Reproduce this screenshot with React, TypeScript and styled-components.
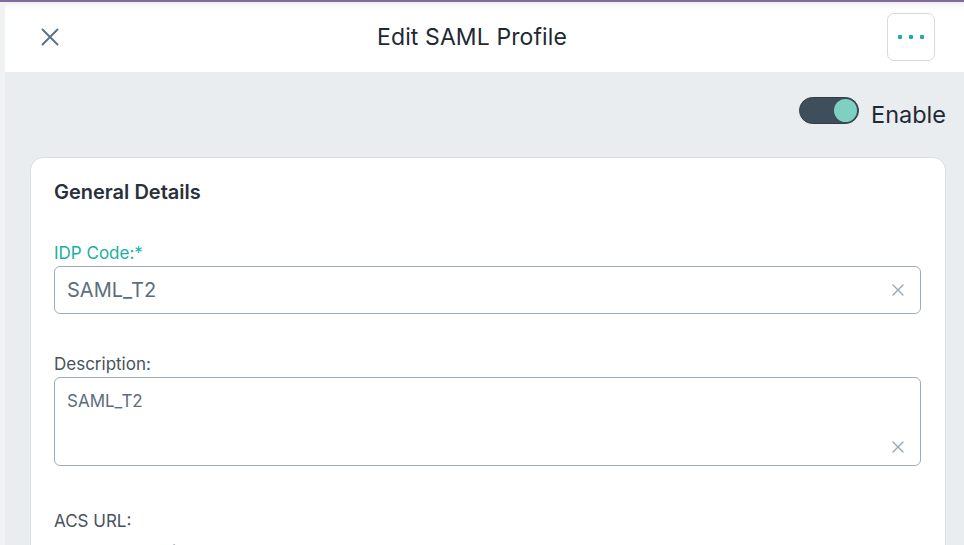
import React from "react"
import styled, { createGlobalStyle } from "styled-components"

const GlobalStyle = createGlobalStyle`
    html, body {
        margin: 0;
        padding: 0;
        height: 100%;
        overflow: hidden;
        background: #f1f2f4;
        font-family: Inter, "Noto Sans", sans-serif;
    }
    * {
        box-sizing: border-box;
    }
`

const Page = styled.div`
    display: flex;
    height: 545px;
    border-top: 2px solid #7f6c9b;
    padding-left: 5px;
`

const Panel = styled.div`
    flex: 1;
    display: flex;
    flex-direction: column;
    background: #eaedf0;
    overflow: hidden;
`

const Header = styled.header`
    height: 70px;
    flex-shrink: 0;
    display: flex;
    align-items: center;
    padding: 0 29px 0 27px;
    background: #ffffff;
    box-shadow: inset 0 7px 6px -5px rgba(60, 60, 80, 0.12);
`

const IconButton = styled.button`
    width: 36px;
    height: 36px;
    padding: 0;
    border: 0;
    background: transparent;
    display: flex;
    align-items: center;
    justify-content: center;
    color: #5a7386;
    cursor: pointer;
`

const Title = styled.h1`
    flex: 1;
    margin: 0 11px 0 0;
    text-align: center;
    font-size: 23px;
    font-weight: 400;
    color: #1f2933;
    letter-spacing: 0.1px;
`

const MoreButton = styled.button`
    width: 48px;
    height: 48px;
    padding: 0;
    border: 1px solid #d3dae1;
    border-radius: 7px;
    background: #ffffff;
    display: flex;
    align-items: center;
    justify-content: center;
    gap: 7px;
    cursor: pointer;
`

const Dot = styled.span`
    width: 4px;
    height: 4px;
    border-radius: 1px;
    background: #17b3a0;
`

const Body = styled.div`
    padding: 25px 18px 0 25px;
`

const EnableRow = styled.div`
    display: flex;
    justify-content: flex-end;
    align-items: center;
    gap: 12px;
    height: 27px;
`

const Track = styled.div<{ $on: boolean }>`
    width: 60px;
    height: 27px;
    border-radius: 14px;
    background: ${({ $on }) => ($on ? "#3e4e5b" : "#c5ccd3")};
    border: 1px solid #2f3d49;
    display: flex;
    align-items: center;
    justify-content: ${({ $on }) => ($on ? "flex-end" : "flex-start")};
    padding: 0 1px;
`

const Knob = styled.span`
    width: 23px;
    height: 23px;
    border-radius: 50%;
    background: #7fd0c1;
`

const EnableLabel = styled.span`
    margin-top: 7px;
    font-size: 23.5px;
    color: #1f2a37;
`

const Card = styled.section`
    margin-top: 33px;
    background: #ffffff;
    border: 1px solid #d9dee4;
    border-radius: 13px;
    padding: 22px 24px 0 23px;
    height: 420px;
`

const CardTitle = styled.h2`
    margin: 0 0 39px;
    font-size: 20px;
    line-height: 24px;
    font-weight: 600;
    color: #27303b;
`

const Field = styled.div<{ $gap?: number }>`
    display: flex;
    flex-direction: column;
    gap: 3px;
    margin-bottom: ${({ $gap }) => $gap ?? 40}px;
`

const Label = styled.label<{ $accent?: boolean }>`
    font-size: 17px;
    line-height: 20px;
    color: ${({ $accent }) => ($accent ? "#19b09c" : "#47525e")};
`

const InputBox = styled.div<{ $multi?: boolean }>`
    position: relative;
    height: ${({ $multi }) => ($multi ? 89 : 48)}px;
    border: 1px solid #9eacb9;
    border-radius: 6px;
    display: flex;
    align-items: ${({ $multi }) => ($multi ? "flex-start" : "center")};
    padding: ${({ $multi }) => ($multi ? "13px 12px" : "0 12px")};
    color: #5d6d7d;
`

const Value = styled.span<{ $small?: boolean }>`
    font-size: ${({ $small }) => ($small ? 17 : 20)}px;
    line-height: 20px;
    flex: 1;
`

const Clear = styled.span<{ $multi?: boolean }>`
    position: absolute;
    right: 16px;
    ${({ $multi }) => ($multi ? "bottom: 12px;" : "top: 17px;")}
    width: 12px;
    height: 12px;
    display: flex;
    color: #97a8b8;
`

const UrlText = styled.div`
    margin-top: 11px;
    font-size: 17px;
    line-height: 20px;
    color: #4a5663;
    white-space: nowrap;
`

const CloseIcon = ({ size, stroke }: { size: number; stroke: number }) => (
    <svg width={size} height={size} viewBox="0 0 12 12" fill="none">
        <path
            d="M1 1L11 11M11 1L1 11"
            stroke="currentColor"
            strokeWidth={stroke}
            strokeLinecap="round"
        />
    </svg>
)

const App = () => {
    return (
        <>
            <GlobalStyle />
            <Page>
                <Panel>
                    <Header>
                        <IconButton aria-label="Close">
                            <CloseIcon size={18} stroke={1.3} />
                        </IconButton>
                        <Title>Edit SAML Profile</Title>
                        <MoreButton aria-label="More">
                            <Dot />
                            <Dot />
                            <Dot />
                        </MoreButton>
                    </Header>
                    <Body>
                        <EnableRow>
                            <Track $on>
                                <Knob />
                            </Track>
                            <EnableLabel>Enable</EnableLabel>
                        </EnableRow>
                        <Card>
                            <CardTitle>General Details</CardTitle>
                            <Field>
                                <Label $accent>IDP Code:*</Label>
                                <InputBox>
                                    <Value>SAML_T2</Value>
                                    <Clear>
                                        <CloseIcon size={12} stroke={1.4} />
                                    </Clear>
                                </InputBox>
                            </Field>
                            <Field $gap={45}>
                                <Label>Description:</Label>
                                <InputBox $multi>
                                    <Value $small>SAML_T2</Value>
                                    <Clear $multi>
                                        <CloseIcon size={12} stroke={1.4} />
                                    </Clear>
                                </InputBox>
                            </Field>
                            <Label>ACS URL:</Label>
                            <UrlText>
                                https://sso-login.corp.example.com/auth/saml/ATES.WQS.ACS.4TT/SAML_T2
                            </UrlText>
                        </Card>
                    </Body>
                </Panel>
            </Page>
        </>
    )
}

export default App
